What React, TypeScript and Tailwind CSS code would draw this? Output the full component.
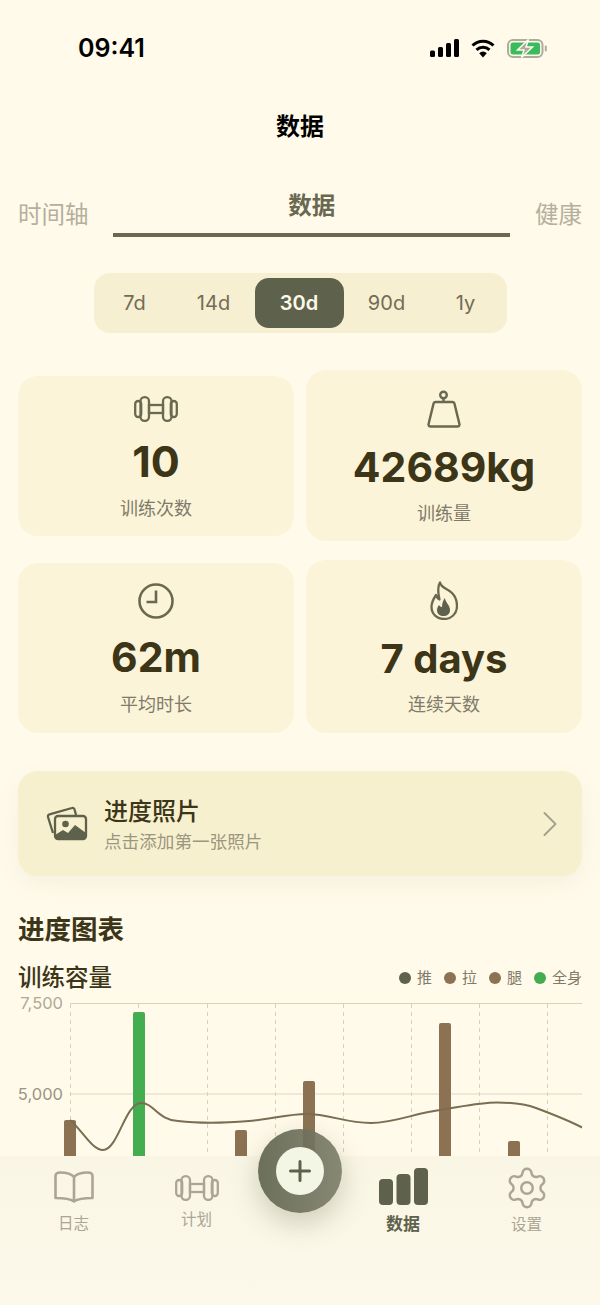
import { type FC, type ReactNode } from "react";
import { ChevronRight, Settings } from "lucide-react";

const DumbbellIcon: FC<{ className?: string; stroke: string }> = ({ className, stroke }) => (
    <svg viewBox="0 0 44 26" fill="none" stroke={stroke} strokeWidth="2.3" className={className}>
        <rect x="1.2" y="5" width="6" height="16" rx="3" />
        <rect x="6.5" y="1.2" width="8.5" height="23.6" rx="4" />
        <rect x="15" y="9" width="14" height="8" />
        <rect x="29" y="1.2" width="8.5" height="23.6" rx="4" />
        <rect x="36.8" y="5" width="6" height="16" rx="3" />
    </svg>
);

const WeightIcon = () => (
    <svg viewBox="0 0 34 38" fill="none" stroke="#696951" strokeWidth="2.4" className="h-[38px] w-[34px]">
        <circle cx="16.5" cy="5" r="3.3" />
        <path d="M16.5 8.5V12" />
        <path d="M8.5 12h17a2 2 0 0 1 1.9 1.4l5 20.5a2 2 0 0 1-1.9 2.6H3.5a2 2 0 0 1-1.9-2.6l5-20.5A2 2 0 0 1 8.5 12z" />
    </svg>
);

const ClockIcon = () => (
    <svg viewBox="0 0 36 36" fill="none" stroke="#696951" strokeWidth="2.6" className="h-9 w-9">
        <circle cx="18" cy="18" r="16.5" />
        <path d="M18 7.5V19H8.5" />
    </svg>
);

const FlameIcon = () => (
    <svg viewBox="0 0 28 39" className="h-[39px] w-7">
        <path
            d="M10 1.5C11 7 17 7 22 12C26 16 27 20 27 25C27 33 21 38 14 38C7 38 1.5 33 1.5 26C1.5 21 4 17 6 14C7 17 8 18 9.5 18.5C8 12 7 6 10 1.5Z"
            fill="none"
            stroke="#696951"
            strokeWidth="2.3"
            strokeLinejoin="round"
        />
        <path
            d="M15 17C15 21 20 24 20 29C20 33 17 35 13.5 35C10 35 7 33 7 29C7 27 8 25 9 24C10 25.5 11 26 12 26C12 23 13 19 15 17Z"
            fill="#5e624c"
        />
    </svg>
);

const PhotosIcon = () => (
    <svg viewBox="0 0 42 36" fill="none" className="h-9 w-[42px]">
        <path
            d="M7 27L2 11a2 2 0 0 1 1.5-2.6L26 2a2 2 0 0 1 2.6 1.5L30 9"
            stroke="#5e624c"
            strokeWidth="2.3"
            strokeLinejoin="round"
        />
        <rect x="9" y="10" width="31" height="23" rx="3" stroke="#5e624c" strokeWidth="2.3" />
        <circle cx="19.5" cy="18" r="3.3" fill="#5e624c" />
        <path d="M9 29L17 24L22 27L29 19L40 27V31a2 2 0 0 1-2 2H11a2 2 0 0 1-2-2Z" fill="#5e624c" />
    </svg>
);

const BookIcon = () => (
    <svg viewBox="0 0 40 32" fill="none" stroke="#aaa595" strokeWidth="2.6" strokeLinejoin="round" className="h-8 w-10">
        <path d="M20 6C17 2.5 12 1.5 6 1.5C3 1.5 1.5 3 1.5 5V27C8 27 15 27 20 30.5C25 27 32 27 38.5 27V5C38.5 3 37 1.5 34 1.5C28 1.5 23 2.5 20 6ZM20 6V30.5" />
    </svg>
);

const StatCard: FC<{
    icon: ReactNode;
    value: string;
    label: string;
    className: string;
    valueClassName: string;
    labelClassName: string;
}> = ({ icon, value, label, className, valueClassName, labelClassName }) => (
    <div className={`flex flex-col items-center rounded-[20px] bg-[#fbf4d8] ${className}`}>
        {icon}
        <div className={`leading-[48px] font-bold whitespace-nowrap text-[#3c3518] ${valueClassName}`}>{value}</div>
        <div className={`text-lg leading-6 text-[#7f7a69] ${labelClassName}`}>{label}</div>
    </div>
);

const ranges = [
    { label: "7d", className: "w-[76px] text-[#736c55]" },
    { label: "14d", className: "w-[82px] text-[#736c55]" },
    { label: "30d", className: "w-[89px] rounded-[14px] bg-[#5e624c] font-semibold text-[#fdf9e8]" },
    { label: "90d", className: "w-[86px] text-[#736c55]" },
    { label: "1y", className: "w-[72px] text-[#736c55]" },
];

const legend = [
    { label: "推", color: "bg-[#5e624c]" },
    { label: "拉", color: "bg-[#8c7253]" },
    { label: "腿", color: "bg-[#8c7253]" },
    { label: "全身", color: "bg-[#44ad50]" },
];

const gridX = [70, 138, 207, 275, 343, 411, 479, 547];

const bars = [
    { x: 64, top: 1120, fill: "#8c7253" },
    { x: 133, top: 1012, fill: "#44ad50" },
    { x: 235, top: 1130, fill: "#8c7253" },
    { x: 303, top: 1081, fill: "#8c7253" },
    { x: 439, top: 1023, fill: "#8c7253" },
    { x: 508, top: 1141, fill: "#8c7253" },
];

const VolumeChart = () => (
    <svg viewBox="0 994 600 166" className="block h-[166px] w-[600px]">
        <text x="63" y="1009" textAnchor="end" fontSize="16.5" fill="#aea996">7,500</text>
        <text x="63" y="1100" textAnchor="end" fontSize="16.5" fill="#9a9582">5,000</text>
        <line x1="70" y1="1003.5" x2="582" y2="1003.5" stroke="#d8d2bd" strokeWidth="1" />
        <line x1="70" y1="1094" x2="582" y2="1094" stroke="#e8e2cc" strokeWidth="1.5" />
        {gridX.map((x) => (
            <line key={x} x1={x + 0.5} y1="1004" x2={x + 0.5} y2="1160" stroke="#d8d2bd" strokeWidth="1" strokeDasharray="4 4" />
        ))}
        {bars.map((b) => (
            <path
                key={b.x}
                d={`M${b.x} 1160V${b.top + 2}a2 2 0 0 1 2-2h8a2 2 0 0 1 2 2V1160Z`}
                fill={b.fill}
            />
        ))}
        <path
            d="M70 1120C82 1130 92 1150 103 1150C118 1150 125 1103 141 1103C154 1103 158 1120 178 1121C195 1123 225 1123 249 1121C270 1119 290 1114 306 1114C330 1114 345 1123 371 1123C395 1123 415 1113 440 1110C465 1106 480 1102.5 497 1102.5C515 1102.5 525 1104 536 1108C552 1114 568 1120 582 1127.5"
            fill="none"
            stroke="#7a6d52"
            strokeWidth="2"
        />
    </svg>
);

export default function App() {
    return (
        <div className="relative h-[1305px] w-[600px] overflow-hidden bg-[#fffaea] font-['Inter','Noto_Sans_CJK_SC',sans-serif]">
            {/* Status bar */}
            <div className="flex h-24 items-center justify-between pr-[53px] pl-[78px]">
                <span className="pt-0.5 text-[25px] font-semibold text-black">09:41</span>
                <div className="flex items-center gap-3">
                    <svg viewBox="0 0 29 18" className="h-[18px] w-[29px]" fill="#000">
                        <rect x="0" y="11.5" width="5" height="6.5" rx="1.5" />
                        <rect x="8" y="8" width="5" height="10" rx="1.5" />
                        <rect x="16" y="4" width="5" height="14" rx="1.5" />
                        <rect x="24" y="0" width="5" height="18" rx="1.5" />
                    </svg>
                    <svg viewBox="0 0 24 19" className="h-[19px] w-6" fill="none" stroke="#000" strokeWidth="3">
                        <path d="M1.5 6.5A15 15 0 0 1 22.5 6.5" />
                        <path d="M5.5 10.8A9.5 9.5 0 0 1 18.5 10.8" />
                        <path d="M12 18.5L8.2 14.2A5.2 5.2 0 0 1 15.8 14.2Z" fill="#000" stroke="none" />
                    </svg>
                    <svg viewBox="0 0 40 19" className="h-[19px] w-10">
                        <rect x="1" y="1" width="34.5" height="17" rx="5" fill="none" stroke="#aeac9e" strokeWidth="2" />
                        <rect x="3.5" y="3.5" width="29.5" height="12" rx="2.5" fill="#39bb5e" />
                        <rect x="37.8" y="6.5" width="2" height="6" rx="1" fill="#aeac9e" />
                        <path d="M21.5 0.5L10.5 11H17L14.5 18.5L25.5 8H19Z" fill="#aeaa9c" stroke="#fffaea" strokeWidth="1.5" />
                    </svg>
                </div>
            </div>

            {/* Title */}
            <div className="flex h-[60px] items-center justify-center pt-0.5 text-2xl font-semibold text-black">数据</div>

            {/* Tabs */}
            <div className="flex h-[81px] items-end justify-between px-[18px]">
                <span className="mb-1.5 text-[23.5px] leading-8 text-[#b5af9e]">时间轴</span>
                <div className="flex w-[397px] flex-col items-center border-b-4 border-[#696951]">
                    <span className="mb-[11px] text-[23.5px] leading-8 font-semibold text-[#696951]">数据</span>
                </div>
                <span className="mb-1.5 text-[23.5px] leading-8 text-[#b5af9e]">健康</span>
            </div>

            {/* Range selector */}
            <div className="mx-auto mt-9 flex h-[60px] w-[413px] items-center rounded-2xl bg-[#f6efd1] pl-[3px]">
                {ranges.map((r) => (
                    <div key={r.label} className={`flex h-[50px] items-center justify-center text-xl ${r.className}`}>
                        {r.label}
                    </div>
                ))}
            </div>

            {/* Stats */}
            <div className="mt-[37px] grid grid-cols-2 items-start gap-x-3 gap-y-[19px] px-[18px]">
                <StatCard
                    className="mt-1.5 h-40 pt-5"
                    valueClassName="mt-[15px] text-[43px]"
                    labelClassName="mt-3"
                    icon={<DumbbellIcon stroke="#696951" className="h-[26px] w-11" />}
                    value="10"
                    label="训练次数"
                />
                <StatCard
                    className="h-[171px] pt-5"
                    valueClassName="mt-[15px] text-[41px]"
                    labelClassName="mt-[11px]"
                    icon={<WeightIcon />}
                    value="42689kg"
                    label="训练量"
                />
                <StatCard
                    className="mt-[3px] h-[170px] pt-5"
                    valueClassName="mt-3.5 text-[41px]"
                    labelClassName="mt-3"
                    icon={<ClockIcon />}
                    value="62m"
                    label="平均时长"
                />
                <StatCard
                    className="h-[173px] pt-[21px]"
                    valueClassName="mt-[15px] text-[40px]"
                    labelClassName="mt-2.5"
                    icon={<FlameIcon />}
                    value="7 days"
                    label="连续天数"
                />
            </div>

            {/* Progress photos */}
            <div className="mx-[18px] mt-[38px] flex h-[105px] items-center rounded-[20px] bg-[#f7f0cf] pr-2.5 pl-7 shadow-[0_8px_24px_rgba(120,110,70,0.07)]">
                <PhotosIcon />
                <div className="ml-4 flex-1 pt-[3px]">
                    <div className="text-2xl leading-8 font-medium text-[#3c3518]">进度照片</div>
                    <div className="mt-0.5 text-[17.6px] leading-6 text-[#9b9680]">点击添加第一张照片</div>
                </div>
                <ChevronRight size={44} strokeWidth={1.1} className="text-[#a5a08e]" />
            </div>

            {/* Charts */}
            <div className="mt-[35px] px-[18px] text-[26.5px] leading-9 font-semibold text-[#3c3518]">进度图表</div>
            <div className="mt-[15px] flex h-8 items-center justify-between px-[18px]">
                <span className="text-[23.5px] font-medium text-[#3c3518]">训练容量</span>
                <div className="flex items-center gap-3">
                    {legend.map((l) => (
                        <div key={l.label} className="flex items-center gap-1.5">
                            <span className={`h-3 w-3 rounded-full ${l.color}`} />
                            <span className="text-[15px] text-[#7f7a69]">{l.label}</span>
                        </div>
                    ))}
                </div>
            </div>
            <VolumeChart />

            {/* Bottom navigation */}
            <div className="absolute inset-x-0 bottom-0 grid h-[149px] grid-cols-[123px_123px_83px_124px_123px] bg-gradient-to-b from-[#f9f6e6] to-[#fdf9ea] pr-2.5 pl-3">
                <div className="flex flex-col items-center pt-[15px]">
                    <BookIcon />
                    <span className="mt-[11px] text-[15.5px] leading-5 text-[#aaa595]">日志</span>
                </div>
                <div className="flex flex-col items-center pt-[19px]">
                    <DumbbellIcon stroke="#aaa595" className="h-[26px] w-11" />
                    <span className="mt-[9px] text-[15.5px] leading-5 text-[#aaa595]">计划</span>
                </div>
                <div />
                <div className="flex flex-col items-center pt-3">
                    <svg viewBox="0 0 49 37" fill="#5e624c" className="h-[37px] w-[49px]">
                        <rect x="0" y="11" width="14" height="26" rx="4" />
                        <rect x="17.5" y="6" width="14" height="31" rx="4" />
                        <rect x="35" y="0" width="14" height="37" rx="4" />
                    </svg>
                    <span className="mt-[9px] text-[17px] leading-5 font-semibold text-[#5e624c]">数据</span>
                </div>
                <div className="flex flex-col items-center pt-[9px]">
                    <Settings size={46} strokeWidth={1.3} className="text-[#aaa595]" />
                    <span className="mt-1 text-[15.5px] leading-5 text-[#aaa595]">设置</span>
                </div>
            </div>

            {/* Add button */}
            <div className="absolute top-[1129px] left-[258px] flex h-[84px] w-[84px] items-center justify-center rounded-full bg-gradient-to-r from-[#5e624ce8] to-[#7b7d69e8] shadow-[0_10px_28px_rgba(90,90,60,0.28)]">
                <div className="flex h-12 w-12 items-center justify-center rounded-full bg-[#f3f6e4]">
                    <svg viewBox="0 0 22 22" className="h-[22px] w-[22px]" fill="none" stroke="#5e624c" strokeWidth="3" strokeLinecap="round">
                        <path d="M11 1.5v19M1.5 11h19" />
                    </svg>
                </div>
            </div>
        </div>
    );
}
